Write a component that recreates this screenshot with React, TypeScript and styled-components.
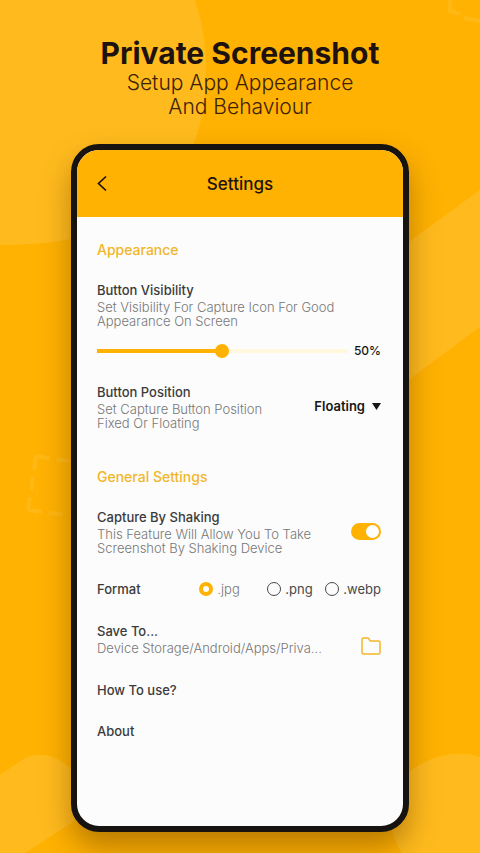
import React, { useState } from "react";
import styled, { createGlobalStyle } from "styled-components";

const amber = "#ffb202";
const ink = "#1e1210";

const GlobalStyle = createGlobalStyle`
  *, *::before, *::after { box-sizing: border-box; }
  body { margin: 0; background: ${amber}; font-family: Inter, "Open Sans", sans-serif; }
  h1, h2, h3, p, fieldset, legend { margin: 0; padding: 0; border: 0; }
  button, input, select { font: inherit; color: inherit; margin: 0; }
`;

const Page = styled.div`
  position: relative;
  isolation: isolate;
  overflow: hidden;
  min-height: 100vh;
  padding: 36px 71px 21px;
  background: ${amber};
`;

const Backdrop = styled.svg`
  position: absolute;
  inset: 0;
  z-index: -1;
  width: 100%;
  height: 100%;
`;

const Intro = styled.header`
  margin: 0 -40px 25px;
  text-align: center;
  color: ${ink};
`;

const Title = styled.h1`
  font-size: 30px;
  line-height: 34px;
  font-weight: 700;
`;

const Tagline = styled.p`
  font-size: 21px;
  line-height: 24px;
  font-weight: 300;
  padding-top: 1px;
  color: #3c2205;
`;

const Phone = styled.main`
  max-width: 420px;
  margin: 0 auto;
  border: 6px solid #171310;
  border-radius: 28px;
  overflow: hidden;
  background: #fcfcfc;
  box-shadow: 0 16px 30px rgba(90, 50, 0, 0.42);
`;

const AppBar = styled.div`
  display: grid;
  grid-template-columns: 24px 1fr 24px;
  align-items: center;
  height: 67px;
  padding: 0 17px;
  background: ${amber};
  color: ${ink};
`;

const AppBarTitle = styled.h2`
  font-size: 17px;
  line-height: 20px;
  font-weight: 500;
  text-align: center;
`;

const IconButton = styled.button`
  display: flex;
  flex: none;
  align-items: center;
  padding: 0;
  border: 0;
  background: none;
  cursor: pointer;
`;

const Content = styled.div`
  padding: 23px 22px 85px 20px;
`;

const Group = styled.section`
  & + & { margin-top: 37px; }
`;

const GroupTitle = styled.h3`
  margin-bottom: 20px;
  font-size: 14px;
  line-height: 20px;
  font-weight: 500;
  color: #f2b62a;
`;

const Setting = styled.div<{ $gap?: number; $align?: string }>`
  display: flex;
  align-items: ${({ $align = "center" }) => $align};
  justify-content: space-between;
  margin-top: ${({ $gap = 0 }) => $gap}px;
`;

const Label = styled.label`
  display: block;
  font-size: 13px;
  line-height: 20px;
  font-weight: 500;
  color: #3b3b3b;
`;

const Description = styled.p`
  font-size: 13px;
  line-height: 14px;
  font-weight: 300;
  color: #777;
  white-space: nowrap;
`;

const SliderRow = styled.div`
  display: flex;
  align-items: center;
  gap: 6px;
  height: 20px;
  margin-top: 13px;
`;

const Slider = styled.input`
  flex: 1;
  min-width: 0;
  height: 14px;
  appearance: none;
  background: linear-gradient(${amber}, ${amber}) left / 50% 4px no-repeat,
    linear-gradient(#fff8dc, #fff8dc) center / 100% 4px no-repeat;
  border-radius: 2px;
  &::-webkit-slider-thumb {
    appearance: none;
    width: 14px;
    height: 14px;
    border-radius: 50%;
    background: ${amber};
  }
`;

const Percent = styled.output`
  font-size: 12px;
  font-weight: 500;
  line-height: 20px;
  color: #161616;
`;

const Picker = styled.div`
  display: flex;
  align-items: center;
  gap: 7px;
  color: #161616;
`;

const Select = styled.select`
  appearance: none;
  field-sizing: content;
  padding: 0;
  border: 0;
  background: none;
  font-size: 13px;
  line-height: 20px;
  font-weight: 600;
`;

const Switch = styled.input`
  flex: none;
  display: flex;
  align-items: center;
  width: 30px;
  height: 17px;
  padding: 2px;
  appearance: none;
  border-radius: 9px;
  background: #c9c9c9;
  &::before {
    content: "";
    width: 13px;
    height: 13px;
    border-radius: 50%;
    background: #fff;
  }
  &:checked { justify-content: flex-end; background: ${amber}; }
`;

const Choices = styled.fieldset`
  display: grid;
  grid-template-columns: 68px 58px auto;
`;

const Choice = styled.label<{ $active: boolean }>`
  display: flex;
  align-items: center;
  gap: 4px;
  font-size: 13px;
  line-height: 20px;
  font-weight: ${({ $active }) => ($active ? 300 : 400)};
  color: ${({ $active }) => ($active ? "#777" : "#484848")};
`;

const Radio = styled.input`
  flex: none;
  width: 14px;
  height: 14px;
  appearance: none;
  border: 1px solid #484848;
  border-radius: 50%;
  &:checked { border: 4px solid ${amber}; background: #fff; }
`;

const LinkRow = styled.a`
  display: block;
  margin-top: 21px;
  font-size: 13px;
  line-height: 20px;
  font-weight: 500;
  color: #3b3b3b;
  text-decoration: none;
`;

const Links = styled.nav`
  padding-top: 4px;
`;

export default function App() {
  const [visibility, setVisibility] = useState(50);
  const [position, setPosition] = useState("Floating");
  const [format, setFormat] = useState(".jpg");

  return (
    <Page>
      <GlobalStyle />
      <Backdrop viewBox="0 0 480 853" preserveAspectRatio="xMidYMid slice" aria-hidden="true">
        <g fill="#ffbb1d">
          <path d="M0 0H195C212 50 208 108 194 143C165 218 100 245 0 245Z" />
          <path d="M480 190L300 321V460L480 327Z" />
          <path d="M0 775L25 758Q43 750 61 761C90 780 95 812 62 829L25 853H0Z" />
          <path d="M404 775C430 754 460 750 480 757V853H402C385 825 385 795 404 775Z" />
        </g>
        <g fill="none" stroke="#ffbb1d" strokeWidth="4" strokeOpacity="0.7">
          <path d="M36 456L80 463M36 456L28 510M28 510L80 517" strokeDasharray="14 7" />
          <path d="M450 0V11L460 14M464 18L480 21" />
        </g>
      </Backdrop>
      <Intro>
        <Title>Private Screenshot</Title>
        <Tagline>
          Setup App Appearance
          <br />
          And Behaviour
        </Tagline>
      </Intro>
      <Phone>
        <AppBar>
          <IconButton type="button" aria-label="Back">
            <svg width="16" height="20" viewBox="0 0 16 20" fill="none" stroke={ink} strokeWidth="1.7">
              <path d="M12 2.5L4.5 9.5L12 16.5" />
            </svg>
          </IconButton>
          <AppBarTitle>Settings</AppBarTitle>
        </AppBar>
        <Content>
          <Group>
            <GroupTitle>Appearance</GroupTitle>
            <Setting>
              <div>
                <Label htmlFor="visibility">Button Visibility</Label>
                <Description>
                  Set Visibility For Capture Icon For Good
                  <br />
                  Appearance On Screen
                </Description>
              </div>
            </Setting>
            <SliderRow>
              <Slider
                id="visibility"
                type="range"
                min="0"
                max="100"
                value={visibility}
                style={{ backgroundSize: `${visibility}% 4px, 100% 4px` }}
                onChange={(e) => setVisibility(Number(e.target.value))}
              />
              <Percent htmlFor="visibility">{visibility}%</Percent>
            </SliderRow>
            <Setting $gap={21}>
              <div>
                <Label htmlFor="position">Button Position</Label>
                <Description>
                  Set Capture Button Position
                  <br />
                  Fixed Or Floating
                </Description>
              </div>
              <Picker>
                <Select id="position" value={position} onChange={(e) => setPosition(e.target.value)}>
                  <option>Floating</option>
                  <option>Fixed</option>
                </Select>
                <svg width="9" height="7" viewBox="0 0 9 7" fill="currentColor" aria-hidden="true">
                  <path d="M0 0H9L4.5 7Z" />
                </svg>
              </Picker>
            </Setting>
          </Group>
          <Group>
            <GroupTitle>General Settings</GroupTitle>
            <Setting>
              <div>
                <Label htmlFor="shaking">Capture By Shaking</Label>
                <Description>
                  This Feature Will Allow You To Take
                  <br />
                  Screenshot By Shaking Device
                </Description>
              </div>
              <Switch id="shaking" type="checkbox" role="switch" defaultChecked />
            </Setting>
            <Setting $gap={24}>
              <Label as="span" id="format">Format</Label>
              <Choices aria-labelledby="format">
                {[".jpg", ".png", ".webp"].map((name) => (
                  <Choice key={name} $active={format === name}>
                    <Radio type="radio" name="format" checked={format === name} onChange={() => setFormat(name)} />
                    {name}
                  </Choice>
                ))}
              </Choices>
            </Setting>
            <Setting $gap={22} $align="flex-end">
              <div>
                <Label as="span">Save To...</Label>
                <Description>Device Storage/Android/Apps/Priva...</Description>
              </div>
              <IconButton type="button" aria-label="Choose folder">
                <svg width="20" height="18" viewBox="0 0 20 18" fill="none" stroke="#f2b62a" strokeWidth="1.5" strokeLinejoin="round">
                  <path d="M1 15V2.5Q1 1 2.5 1H6.5Q7.5 1 8 2L9 4H17.5Q19 4 19 5.5V15.5Q19 17 17.5 17H2.5Q1 17 1 15.5Z" />
                </svg>
              </IconButton>
            </Setting>
            <Links>
              <LinkRow href="#how-to-use">How To use?</LinkRow>
              <LinkRow href="#about">About</LinkRow>
            </Links>
          </Group>
        </Content>
      </Phone>
    </Page>
  );
}
